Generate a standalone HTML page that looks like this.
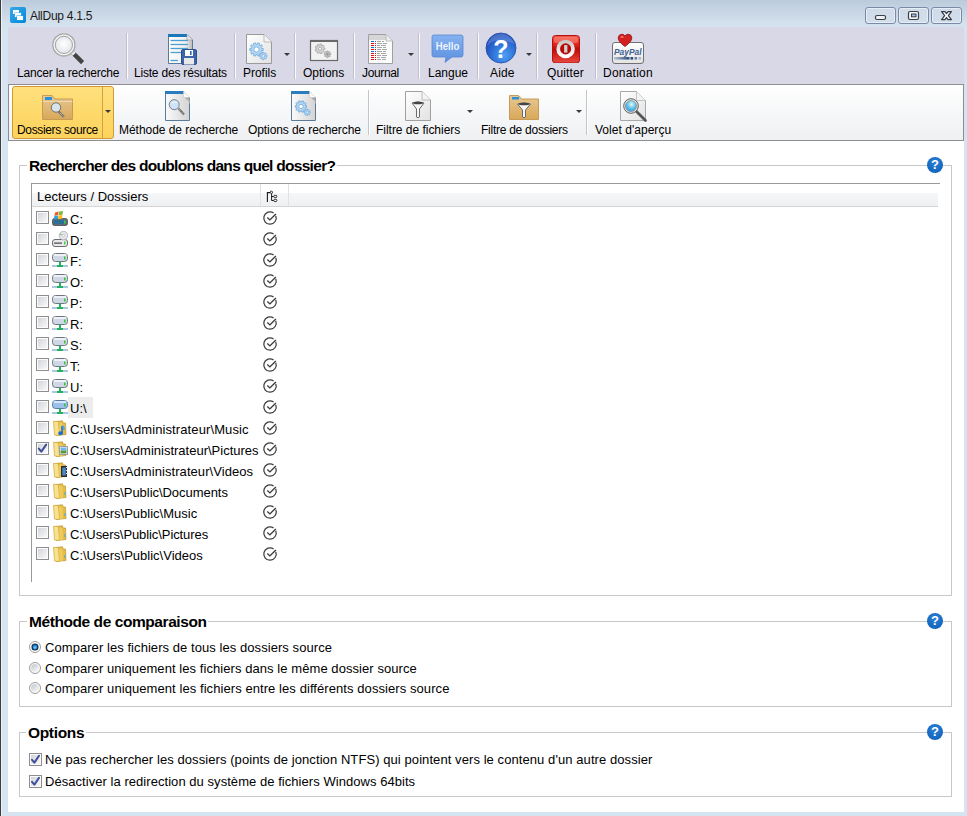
<!DOCTYPE html>
<html><head><meta charset="utf-8">
<style>
*{box-sizing:border-box;margin:0;padding:0}
html,body{width:967px;height:816px;overflow:hidden;background:#d6e3f1;font-family:"Liberation Sans",sans-serif;color:#000}
.a{position:absolute}
.t{position:absolute;white-space:pre;line-height:1}
#title{left:0;top:0;width:967px;height:27px;background:linear-gradient(#bccbdb,#d7e4f0)}
#lb{left:0;top:0;width:1px;height:816px;background:#3c3c3c}
#lb2{left:1px;top:0;width:1px;height:816px;background:#eef3f9}
.cb{top:7px;width:31px;height:17px;border:1px solid #7b89a6;border-radius:3px;background:linear-gradient(#cfdbe9,#d3deeb);box-shadow:inset 0 0 0 1px #e6edf5}
#tb1{left:8px;top:27px;width:956px;height:57px;background:#d9d8e6}
#tb1b{left:8px;top:84px;width:956px;height:1px;background:#8e8e8e}
#tb2{left:8px;top:84px;width:956px;height:57px;border:1px solid #8e8e8e;background:linear-gradient(#ffffff,#eef0f2)}
#client{left:8px;top:141px;width:956px;height:671px;background:#fff}
.sep1{top:33px;width:2px;height:46px;border-left:1px solid #c0c0cc;border-right:1px solid #fafafd}
.sep2{top:90px;width:2px;height:45px;border-left:1px solid #c2c5cc;border-right:1px solid #fff}
.l1{font-size:12px;letter-spacing:-0.2px;top:67px;color:#000}
.l2{font-size:12px;letter-spacing:-0.2px;top:124px;color:#000}
.arr{width:0;height:0;border-left:3px solid transparent;border-right:3px solid transparent;border-top:3px solid #3a3a3a}
.gb{border:1px solid #c8c8c8}
.gt{font-weight:bold;font-size:15.5px;background:#fff;padding:0 2px}
.txt{font-size:13px}
.chk{width:13px;height:13px;border:1px solid #8e8e8e;background:linear-gradient(135deg,#cdd1d8,#f6f6f7 85%);box-shadow:inset 0 0 0 1px #fbfbfb}
.help{width:16px;height:16px;border-radius:50%;background:radial-gradient(circle at 50% 35%,#2a80d4,#0c5cb6);color:#fff;font-weight:bold;font-size:13px;text-align:center;line-height:16px}
.rad{width:12px;height:12px;border-radius:50%;border:1px solid #9a9a9a;background:radial-gradient(circle at 40% 35%,#fff,#d6d6d6)}
</style><style id="fit">#t1{letter-spacing:-0.273px;transform:translateX(0.00px)}#t2{letter-spacing:-0.200px;transform:translateX(0.00px)}#t3{letter-spacing:-0.200px;transform:translateX(-1.00px)}#t4{letter-spacing:-0.033px;transform:translateX(0.00px)}#t5{letter-spacing:-0.033px;transform:translateX(0.00px)}#t6{letter-spacing:-0.367px;transform:translateX(0.00px)}#t7{letter-spacing:0.000px;transform:translateX(-1.00px)}#t8{letter-spacing:0.133px;transform:translateX(0.00px)}#t9{letter-spacing:0.133px;transform:translateX(-1.00px)}#t10{letter-spacing:0.229px;transform:translateX(-1.00px)}#t11{letter-spacing:-0.343px;transform:translateX(0.00px)}#t12{letter-spacing:-0.042px;transform:translateX(0.00px)}#t13{letter-spacing:-0.095px;transform:translateX(0.00px)}#t14{letter-spacing:-0.024px;transform:translateX(-1.00px)}#t15{letter-spacing:-0.259px;transform:translateX(0.00px)}#t16{letter-spacing:0.031px;transform:translateX(0.00px)}#t17{letter-spacing:-0.707px;transform:translateX(0.00px)}#t18{letter-spacing:0.000px;transform:translateX(-1.00px)}#r10{letter-spacing:0.107px;transform:translateX(0.00px)}#r11{letter-spacing:0.000px;transform:translateX(0.00px)}#r12{letter-spacing:0.069px;transform:translateX(0.00px)}#r13{letter-spacing:-0.042px;transform:translateX(0.00px)}#r14{letter-spacing:0.000px;transform:translateX(0.00px)}#r15{letter-spacing:-0.087px;transform:translateX(0.00px)}#r16{letter-spacing:0.000px;transform:translateX(0.00px)}#t36{letter-spacing:-0.428px;transform:translateX(0.00px)}#t37{letter-spacing:0.062px;transform:translateX(0.00px)}#t38{letter-spacing:0.068px;transform:translateX(0.00px)}#t39{letter-spacing:0.074px;transform:translateX(0.00px)}#t40{letter-spacing:-0.334px;transform:translateX(-1.00px)}#t41{letter-spacing:0.078px;transform:translateX(0.00px)}#t42{letter-spacing:0.049px;transform:translateX(0.00px)}</style></head><body>
<div id="title" class="a"></div>
<div id="lb" class="a"></div>
<div id="lb2" class="a"></div>
<!-- app icon -->
<svg class="a" style="left:10px;top:7px" width="16" height="16" viewBox="0 0 16 16">
 <defs><linearGradient id="appg" x1="0" y1="0" x2="1" y2="1"><stop offset="0" stop-color="#3aa8e8"/><stop offset="1" stop-color="#0088d8"/></linearGradient></defs>
 <rect x="0" y="0" width="16" height="16" rx="2" fill="url(#appg)"/>
 <rect x="3" y="3" width="6" height="4" fill="#fff"/>
 <rect x="4.5" y="5.5" width="7" height="5" fill="#48b0ee"/>
 <rect x="5" y="6" width="6" height="4" fill="#fff"/>
 <rect x="6.5" y="8.5" width="7" height="5" fill="#2a9ee4"/>
 <rect x="7" y="9" width="6" height="4" fill="#fff"/>
</svg>
<div id="t1" class="t" style="left:30px;top:10px;font-size:12px;color:#1a1a1a">AllDup 4.1.5</div>
<div class="a cb" style="left:865px"></div>
<div class="a cb" style="left:898px"></div>
<div class="a cb" style="left:931px"></div>
<svg class="a" style="left:865px;top:7px" width="97" height="17" viewBox="0 0 97 17">
 <rect x="10.5" y="8.5" width="10" height="4" rx="1.5" fill="#f0f0f0" stroke="#3a3d4a" stroke-width="1.2"/>
 <rect x="43.5" y="4.5" width="10" height="8" rx="1.5" fill="#f4f4f4" stroke="#3a3d4a" stroke-width="1.2"/>
 <rect x="46.5" y="7" width="4.5" height="2.8" fill="#9cc0e0" stroke="#3a3d4a" stroke-width="1"/>
 <path d="M76.6 4.6 H80 L81.5 6.6 L83 4.6 H86.4 L83.4 8.6 L86.4 12.6 H83 L81.5 10.6 L80 12.6 H76.6 L79.6 8.6 Z" fill="#f6f6f6" stroke="#363a48" stroke-width="1.2" stroke-linejoin="round"/>
</svg>

<div id="tb1" class="a"></div>
<div id="tb2" class="a"></div>
<div id="client" class="a"></div>

<!-- toolbar 1 labels -->
<div id="t2" class="t l1" style="left:17px">Lancer la recherche</div>
<div class="a sep1" style="left:126px"></div>
<div id="t3" class="t l1" style="left:135px">Liste des résultats</div>
<div class="a sep1" style="left:234px"></div>
<div id="t4" class="t l1" style="left:243px">Profils</div>
<div class="a arr" style="left:284px;top:53px"></div>
<div class="a sep1" style="left:294px"></div>
<div id="t5" class="t l1" style="left:303px">Options</div>
<div class="a sep1" style="left:353px"></div>
<div id="t6" class="t l1" style="left:362px">Journal</div>
<div class="a arr" style="left:408px;top:53px"></div>
<div class="a sep1" style="left:418px"></div>
<div id="t7" class="t l1" style="left:429px">Langue</div>
<div class="a sep1" style="left:477px"></div>
<div id="t8" class="t l1" style="left:490px">Aide</div>
<div class="a arr" style="left:526px;top:53px"></div>
<div class="a sep1" style="left:536px"></div>
<div id="t9" class="t l1" style="left:548px">Quitter</div>
<div class="a sep1" style="left:595px"></div>
<div id="t10" class="t l1" style="left:604px">Donation</div>

<!-- toolbar 2 -->
<div class="a" style="left:12px;top:86px;width:102px;height:53px;border:1px solid #d09a36;border-radius:3px;background:linear-gradient(#fee07c,#fdd35c)"></div>
<div class="a" style="left:102px;top:87px;width:1px;height:51px;background:#d4a040"></div>
<div class="a arr" style="left:105px;top:110px"></div>
<div id="t11" class="t l2" style="left:17px">Dossiers source</div>
<div id="t12" class="t l2" style="left:119px">Méthode de recherche</div>
<div id="t13" class="t l2" style="left:248px">Options de recherche</div>
<div class="a sep2" style="left:368px"></div>
<div id="t14" class="t l2" style="left:377px">Filtre de fichiers</div>
<div class="a arr" style="left:467px;top:110px"></div>
<div id="t15" class="t l2" style="left:481px">Filtre de dossiers</div>
<div class="a arr" style="left:576px;top:110px"></div>
<div class="a sep2" style="left:586px"></div>
<div id="t16" class="t l2" style="left:595px">Volet d'aperçu</div>

<div id="icons"><!-- TB1 icons -->
<svg class="a" style="left:48px;top:30px" width="40" height="38" viewBox="0 0 40 38">
 <defs><radialGradient id="lens1" cx="0.5" cy="0.45" r="0.6"><stop offset="0" stop-color="#ffffff"/><stop offset="1" stop-color="#dfe3e8"/></radialGradient></defs>
 <path d="M24.5 22.5 L34.6 32.6" stroke="#444" stroke-width="4.4" stroke-linecap="butt"/>
 <path d="M23.2 21.2 L26.3 24.3" stroke="#e8e8e8" stroke-width="4.4"/>
 <circle cx="15.9" cy="14.9" r="11.1" fill="#f4f4f4" stroke="#a9a9a9" stroke-width="1.3"/>
 <circle cx="15.9" cy="14.9" r="8.6" fill="url(#lens1)" stroke="#a0a0a0" stroke-width="1"/>
</svg>
<svg class="a" style="left:166px;top:32px" width="34" height="34" viewBox="0 0 34 34">
 <defs><linearGradient id="docg" x1="0" y1="0" x2="1" y2="0"><stop offset="0" stop-color="#fdfdfd"/><stop offset="0.7" stop-color="#f0f0f0"/><stop offset="1" stop-color="#b8b8b8"/></linearGradient></defs>
 <path d="M2.5 2.5 L21 2.5 L26.5 8 L26.5 31.5 L2.5 31.5 Z" fill="url(#docg)" stroke="#5a7a96" stroke-width="1"/>
 <rect x="2" y="2" width="19" height="3" fill="#1a78b8"/>
 <path d="M21 2.5 L21 8 L26.5 8" fill="#e6e6e6" stroke="#9a9a9a" stroke-width="0.6"/>
 <g stroke="#4aa0d4" stroke-width="1.3"><path d="M4.5 8.5H22"/><path d="M4.5 12.5H22"/><path d="M4.5 16.5H22"/><path d="M4.5 20.5H16"/><path d="M4.5 28.5H12"/></g>
 <rect x="15.5" y="17.5" width="15" height="15" rx="1.5" fill="#3d64a8" stroke="#2e4f8c" stroke-width="1"/>
 <rect x="19" y="18" width="8" height="6" fill="#fbfbfb"/>
 <rect x="24" y="19" width="1.6" height="4" fill="#3d64a8"/>
 <rect x="18" y="26" width="10" height="6.5" fill="#e8e8e8"/>
</svg>
<svg class="a" style="left:245px;top:33px" width="30" height="32" viewBox="0 0 30 32">
 <defs><linearGradient id="docw" x1="0" y1="0" x2="1" y2="1"><stop offset="0" stop-color="#ffffff"/><stop offset="1" stop-color="#e2e2e2"/></linearGradient></defs>
 <path d="M1.5 1.5 L19 1.5 L26.5 9 L26.5 30.5 L1.5 30.5 Z" fill="url(#docw)" stroke="#9a9a9a" stroke-width="1"/>
 <path d="M19 1.5 L19 9 L26.5 9" fill="#f4f4f4" stroke="#b0b0b0" stroke-width="0.8"/>
 <path d="M16.36 15.32 L18.24 15.56 L18.24 17.44 L16.36 17.68 L16.13 18.40 L17.50 19.70 L16.40 21.22 L14.74 20.31 L14.13 20.75 L14.47 22.62 L12.69 23.20 L11.88 21.49 L11.12 21.49 L10.31 23.20 L8.53 22.62 L8.87 20.75 L8.26 20.31 L6.60 21.22 L5.50 19.70 L6.87 18.40 L6.64 17.68 L4.76 17.44 L4.76 15.56 L6.64 15.32 L6.87 14.60 L5.50 13.30 L6.60 11.78 L8.26 12.69 L8.87 12.25 L8.53 10.38 L10.31 9.80 L11.12 11.51 L11.88 11.51 L12.69 9.80 L14.47 10.38 L14.13 12.25 L14.74 12.69 L16.40 11.78 L17.50 13.30 L16.13 14.60 Z" fill="#b6d8f4" stroke="#5e9fd6" stroke-width="0.7"/><circle cx="11.5" cy="16.5" r="2.6" fill="#ffffff" stroke="#5e9fd6" stroke-width="0.7"/><path d="M20.98 22.18 L22.04 22.35 L22.04 23.65 L20.98 23.82 L20.77 24.31 L21.41 25.19 L20.49 26.11 L19.61 25.47 L19.12 25.68 L18.95 26.74 L17.65 26.74 L17.48 25.68 L16.99 25.47 L16.11 26.11 L15.19 25.19 L15.83 24.31 L15.62 23.82 L14.56 23.65 L14.56 22.35 L15.62 22.18 L15.83 21.69 L15.19 20.81 L16.11 19.89 L16.99 20.53 L17.48 20.32 L17.65 19.26 L18.95 19.26 L19.12 20.32 L19.61 20.53 L20.49 19.89 L21.41 20.81 L20.77 21.69 Z" fill="#b6d8f4" stroke="#5e9fd6" stroke-width="0.6"/><circle cx="18.3" cy="23" r="1.3" fill="#ffffff" stroke="#5e9fd6" stroke-width="0.6"/>
</svg>
<svg class="a" style="left:309px;top:39px" width="30" height="23" viewBox="0 0 30 23">
 <rect x="1.5" y="1.5" width="27" height="20" fill="#f2f2f2" stroke="#6a6a6a" stroke-width="1.2"/>
 <rect x="1" y="1" width="28" height="2" fill="#6a6a6a"/>
 <path d="M14.47 8.86 L15.84 9.05 L15.84 10.55 L14.47 10.74 L14.27 11.31 L15.19 12.34 L14.23 13.49 L13.05 12.76 L12.53 13.06 L12.58 14.44 L11.10 14.70 L10.67 13.39 L10.08 13.28 L9.23 14.37 L7.93 13.62 L8.45 12.34 L8.06 11.88 L6.71 12.16 L6.19 10.75 L7.41 10.10 L7.41 9.50 L6.19 8.85 L6.71 7.44 L8.06 7.72 L8.45 7.26 L7.93 5.98 L9.23 5.23 L10.08 6.32 L10.67 6.21 L11.10 4.90 L12.58 5.16 L12.53 6.54 L13.05 6.84 L14.23 6.11 L15.19 7.26 L14.27 8.29 Z" fill="#d8d8d8" stroke="#9a9a9a" stroke-width="0.7"/><circle cx="11" cy="9.8" r="1.7" fill="#f2f2f2" stroke="#9a9a9a" stroke-width="0.7"/><path d="M20.79 14.59 L21.75 14.73 L21.75 15.87 L20.79 16.01 L20.62 16.42 L21.20 17.20 L20.40 18.00 L19.62 17.42 L19.21 17.59 L19.07 18.55 L17.93 18.55 L17.79 17.59 L17.38 17.42 L16.60 18.00 L15.80 17.20 L16.38 16.42 L16.21 16.01 L15.25 15.87 L15.25 14.73 L16.21 14.59 L16.38 14.18 L15.80 13.40 L16.60 12.60 L17.38 13.18 L17.79 13.01 L17.93 12.05 L19.07 12.05 L19.21 13.01 L19.62 13.18 L20.40 12.60 L21.20 13.40 L20.62 14.18 Z" fill="#c8c8c8" stroke="#8a8a8a" stroke-width="0.6"/><circle cx="18.5" cy="15.3" r="1.0" fill="#a0a0a0" stroke="#8a8a8a" stroke-width="0.6"/>
</svg>
<svg class="a" style="left:367px;top:33px" width="28" height="32" viewBox="0 0 28 32">
 <path d="M1.5 1.5 L19 1.5 L25.5 8 L25.5 30.5 L1.5 30.5 Z" fill="#fbfbfb" stroke="#a0a0a0" stroke-width="1"/>
 <rect x="2" y="2" width="17" height="5" fill="#d6d6d6"/>
 <path d="M19 1.5 L19 8 L25.5 8" fill="#eee" stroke="#b0b0b0" stroke-width="0.8"/>
 <g stroke-width="1.1">
  <path d="M4 8.5h3M4 14.5h3M4 18.5h3" stroke="#2266cc"/>
  <path d="M4 10.5h3M4 12.5h3M4 16.5h3M4 20.5h3M4 22.5h3M4 24.5h3M4 26.5h3" stroke="#dd1111"/>
  <path d="M8 8.5h1M8 14.5h1M8 18.5h1" stroke="#2266cc"/>
  <path d="M8 10.5h1M8 12.5h1M8 16.5h1M8 20.5h1M8 22.5h1M8 24.5h1M8 26.5h1" stroke="#dd1111"/>
  <path d="M10 8.5h4M15 8.5h2M10 10.5h5M16 10.5h4M10 12.5h3M14 12.5h5M10 14.5h5M16 14.5h3M10 16.5h4M15 16.5h5M10 18.5h5M16 18.5h3M10 20.5h3M14 20.5h5M10 22.5h4M15 22.5h5M10 24.5h3M14 24.5h5M10 26.5h4M15 26.5h4" stroke="#a8a8a8"/>
 </g>
</svg>
<svg class="a" style="left:431px;top:34px" width="34" height="30" viewBox="0 0 34 30">
 <defs><linearGradient id="hel" x1="0" y1="0" x2="0" y2="1"><stop offset="0" stop-color="#86b2f0"/><stop offset="1" stop-color="#5b8fe0"/></linearGradient></defs>
 <path d="M3 1 H30 Q32 1 32 3 V21 Q32 23 30 23 H21 L14 28.5 L15 23 H3 Q1 23 1 21 V3 Q1 1 3 1 Z" fill="url(#hel)" stroke="#5a88d0" stroke-width="0.8"/>
 <text x="4.8" y="15.8" textLength="23.5" lengthAdjust="spacingAndGlyphs" font-family="Liberation Sans" font-weight="bold" font-size="10" fill="#eef4ff">Hello</text>
</svg>
<svg class="a" style="left:484px;top:32px" width="34" height="33" viewBox="0 0 34 33">
 <defs><radialGradient id="aid" cx="0.6" cy="0.75" r="0.8"><stop offset="0" stop-color="#4aa0f4"/><stop offset="0.6" stop-color="#2a66d0"/><stop offset="1" stop-color="#1b45b0"/></radialGradient></defs>
 <circle cx="17" cy="16" r="15" fill="url(#aid)" stroke="#1d47a8" stroke-width="0.8"/>
 <path d="M3 14 Q10 4 31 12 Q26 2 17 1.5 Q6 2 3 14 Z" fill="#ffffff" opacity="0.18"/>
 <text x="17" y="26" text-anchor="middle" font-family="Liberation Sans" font-weight="bold" font-size="25" fill="#ffffff">?</text>
</svg>
<svg class="a" style="left:552px;top:35px" width="28" height="28" viewBox="0 0 28 28">
 <defs><linearGradient id="qred" x1="0" y1="0" x2="0" y2="1"><stop offset="0" stop-color="#f25a4a"/><stop offset="0.3" stop-color="#e02a20"/><stop offset="0.5" stop-color="#c00a08"/><stop offset="1" stop-color="#e84a40"/></linearGradient>
 <linearGradient id="qring" x1="0" y1="0" x2="0" y2="1"><stop offset="0" stop-color="#c8c8c8"/><stop offset="1" stop-color="#ffffff"/></linearGradient></defs>
 <rect x="0.5" y="0.5" width="27" height="27.5" rx="3" fill="url(#qred)" stroke="#b81010" stroke-width="1"/>
 <rect x="2" y="2" width="24" height="6" rx="2" fill="#ff9a90" opacity="0.45"/>
 <circle cx="13.6" cy="13.9" r="7.4" fill="#b80808" stroke="url(#qring)" stroke-width="3.7"/>
 <rect x="12.1" y="10.1" width="3.3" height="7.5" fill="#d0d0d0"/>
</svg>
<svg class="a" style="left:611px;top:33px" width="34" height="32" viewBox="0 0 34 32">
 <defs><linearGradient id="ppc" x1="0" y1="0" x2="0" y2="1"><stop offset="0" stop-color="#ffffff"/><stop offset="1" stop-color="#e4e4e4"/></linearGradient>
 <linearGradient id="ppb" x1="0" y1="0" x2="1" y2="0"><stop offset="0" stop-color="#b8c4d4"/><stop offset="1" stop-color="#2a4a78"/></linearGradient></defs>
 <rect x="1.5" y="9.5" width="31" height="21" rx="2.5" fill="url(#ppc)" stroke="#707070" stroke-width="1"/>
 <text x="3" y="21.5" textLength="27.5" lengthAdjust="spacingAndGlyphs" font-family="Liberation Sans" font-style="italic" font-weight="bold" font-size="9.5" fill="#3d6196">PayPal</text>
 <rect x="3" y="24" width="15.5" height="2.6" fill="url(#ppb)"/>
 <rect x="19.5" y="24" width="2.6" height="2.6" fill="#2a4a78"/>
 <rect x="23.5" y="24" width="2.6" height="2.6" fill="#6680a4"/>
 <rect x="27.5" y="24" width="2.6" height="2.6" fill="#a8b8cc"/>
 <path d="M14 13.5 Q7 8.5 7.2 4.8 Q7.6 1.2 11 1.2 Q13 1.2 14 3 Q15 1.2 17 1.2 Q20.6 1.2 20.8 4.8 Q21 8.5 14 13.5 Z" fill="#d42020" stroke="#8a1010" stroke-width="0.8"/>
 <ellipse cx="11" cy="4" rx="1.6" ry="1" fill="#ff9a9a" opacity="0.7"/>
</svg>
<!-- TB2 icons -->
<svg class="a" style="left:41px;top:94px" width="33" height="27" viewBox="0 0 33 27">
 <defs><linearGradient id="tan" x1="0" y1="0" x2="0" y2="1"><stop offset="0" stop-color="#e8c894"/><stop offset="1" stop-color="#d8a858"/></linearGradient></defs>
 <path d="M1.5 1.5 H11 L14 5 H31.5 V25.5 H1.5 Z" fill="url(#tan)" stroke="#c89a58" stroke-width="1"/>
 <path d="M1.5 7.5 H31.5" stroke="#f0dcb8" stroke-width="0.8"/>
 <rect x="4" y="3" width="7" height="3" fill="#2a90d8"/>
 <path d="M17.5 17.5 L23 23" stroke="#6a6a6a" stroke-width="2.2"/>
 <path d="M17.5 17.5 L23 23" stroke="#e8e8e8" stroke-width="1" stroke-dasharray="1 1"/>
 <circle cx="15" cy="13.5" r="4.7" fill="#d8e4ea" stroke="#707070" stroke-width="1"/>
</svg>
<svg class="a" style="left:164px;top:90px" width="28" height="32" viewBox="0 0 28 32"><defs><linearGradient id="docb" x1="0" y1="0" x2="1" y2="0"><stop offset="0" stop-color="#fafafa"/><stop offset="1" stop-color="#d4d4d4"/></linearGradient><linearGradient id="dsh164" x1="0" y1="0" x2="0" y2="1"><stop offset="0" stop-color="#555"/><stop offset="1" stop-color="#d8d8d8"/></linearGradient></defs><path d="M1.5 1.5 H19 L25.5 8 V30.5 H1.5 Z" fill="url(#docb)" stroke="#5a7a9a" stroke-width="1"/><rect x="1" y="1" width="18.5" height="3" fill="#2a7cbc"/><path d="M19.5 1.2 L25.8 7.5 V14 Q23 8 19.5 7.5 Z" fill="url(#dsh164)" opacity="0.85"/><path d="M19.5 1.2 V7.5 H25.8 Z" fill="#fafafa"/><path d="M14.5 18.5 L20 24.5" stroke="#6a6a6a" stroke-width="2.2"/><path d="M15 19 L19.7 24.2" stroke="#e0e0e0" stroke-width="0.8" stroke-dasharray="1 1"/><circle cx="10.2" cy="14.65" r="5" fill="#cfe2f8" stroke="#7a8088" stroke-width="1"/><path d="M7.5 13 Q10 11 13 12.5" stroke="#fff" stroke-width="1" fill="none" opacity="0.8"/></svg>
<svg class="a" style="left:290px;top:90px" width="28" height="32" viewBox="0 0 28 32"><defs><linearGradient id="dsh290" x1="0" y1="0" x2="0" y2="1"><stop offset="0" stop-color="#555"/><stop offset="1" stop-color="#d8d8d8"/></linearGradient></defs><path d="M1.5 1.5 H19 L25.5 8 V30.5 H1.5 Z" fill="url(#docb)" stroke="#5a7a9a" stroke-width="1"/><rect x="1" y="1" width="18.5" height="3" fill="#2a7cbc"/><path d="M19.5 1.2 L25.8 7.5 V14 Q23 8 19.5 7.5 Z" fill="url(#dsh290)" opacity="0.85"/><path d="M19.5 1.2 V7.5 H25.8 Z" fill="#fafafa"/><path d="M15.18 15.48 L16.74 15.70 L16.74 17.30 L15.18 17.52 L14.98 18.13 L16.12 19.23 L15.18 20.52 L13.78 19.78 L13.26 20.16 L13.54 21.72 L12.02 22.21 L11.32 20.79 L10.68 20.79 L9.98 22.21 L8.46 21.72 L8.74 20.16 L8.22 19.78 L6.82 20.52 L5.88 19.23 L7.02 18.13 L6.82 17.52 L5.26 17.30 L5.26 15.70 L6.82 15.48 L7.02 14.87 L5.88 13.77 L6.82 12.48 L8.22 13.22 L8.74 12.84 L8.46 11.28 L9.98 10.79 L10.68 12.21 L11.32 12.21 L12.02 10.79 L13.54 11.28 L13.26 12.84 L13.78 13.22 L15.18 12.48 L16.12 13.77 L14.98 14.87 Z" fill="#b6d8f4" stroke="#5e9fd6" stroke-width="0.7"/><circle cx="11" cy="16.5" r="2.2" fill="#ffffff" stroke="#5e9fd6" stroke-width="0.7"/><path d="M19.49 21.59 L20.45 21.73 L20.45 22.87 L19.49 23.01 L19.32 23.42 L19.90 24.20 L19.10 25.00 L18.32 24.42 L17.91 24.59 L17.77 25.55 L16.63 25.55 L16.49 24.59 L16.08 24.42 L15.30 25.00 L14.50 24.20 L15.08 23.42 L14.91 23.01 L13.95 22.87 L13.95 21.73 L14.91 21.59 L15.08 21.18 L14.50 20.40 L15.30 19.60 L16.08 20.18 L16.49 20.01 L16.63 19.05 L17.77 19.05 L17.91 20.01 L18.32 20.18 L19.10 19.60 L19.90 20.40 L19.32 21.18 Z" fill="#b6d8f4" stroke="#5e9fd6" stroke-width="0.6"/><circle cx="17.2" cy="22.3" r="1.1" fill="#ffffff" stroke="#5e9fd6" stroke-width="0.6"/></svg>
<svg class="a" style="left:404px;top:90px" width="28" height="32" viewBox="0 0 28 32">
 <path d="M1.5 1.5 H18 L26.5 10 V30.5 H1.5 Z" fill="url(#docw)" stroke="#a0a0a0" stroke-width="1"/>
 <path d="M18 1.5 V10 H26.5" fill="#f4f4f4" stroke="#b0b0b0" stroke-width="0.8"/>
 <path d="M8 13 Q14 10.5 20 13 L15.5 19 V27 Q14 28.5 12.5 27 V19 Z" fill="#f6f6f6" stroke="#6a6a6a" stroke-width="1"/>
 <ellipse cx="14" cy="13" rx="5" ry="1.3" fill="#444"/>
</svg>
<svg class="a" style="left:508px;top:94px" width="32" height="27" viewBox="0 0 32 27">
 <path d="M1.5 1.5 H10.5 L13.5 5 H30.5 V25.5 H1.5 Z" fill="url(#tan)" stroke="#c89a58" stroke-width="1"/>
 <rect x="4" y="3" width="7" height="2.5" fill="#2a90d8"/>
 <path d="M9.5 10 Q16 7.5 22.5 10 L17.5 16 V23 Q16 24.5 14.5 23 V16 Z" fill="#f6f6f6" stroke="#6a6a6a" stroke-width="1"/>
 <ellipse cx="16" cy="10" rx="5.5" ry="1.3" fill="#444"/>
</svg>
<svg class="a" style="left:619px;top:90px" width="30" height="33" viewBox="0 0 30 33">
 <defs><radialGradient id="lensb" cx="0.55" cy="0.35" r="0.7"><stop offset="0" stop-color="#e8f8fa"/><stop offset="0.5" stop-color="#68c4e8"/><stop offset="1" stop-color="#2898d8"/></radialGradient></defs>
 <path d="M1.5 1.5 H17.5 L26.5 10.5 V30.5 H1.5 Z" fill="url(#docw)" stroke="#a8a8a8" stroke-width="1"/>
 <path d="M17.5 1.5 V10.5 H26.5" fill="#f4f4f4" stroke="#b8b8b8" stroke-width="0.8"/>
 <path d="M17 21 L26.5 30.5" stroke="#555" stroke-width="2.8" stroke-linecap="round"/>
 <circle cx="12" cy="16" r="7.3" fill="#e8e8e8" stroke="#606060" stroke-width="1"/>
 <circle cx="12" cy="16" r="5.6" fill="url(#lensb)" stroke="#888" stroke-width="0.6"/>
</svg>
</div><!--/icons-->
<!-- group 1 -->
<div class="a gb" style="left:19px;top:165px;width:933px;height:431px"></div>
<div id="t17" class="t gt" style="left:27px;top:158px">Rechercher des doublons dans quel dossier?</div>
<div class="a help" style="left:927px;top:157px">?</div>
<div class="a" style="left:31px;top:183px;width:909px;height:1px;background:#9a9a9a"></div>
<div class="a" style="left:31px;top:183px;width:1px;height:399px;background:#9a9a9a"></div>
<div class="a" style="left:32px;top:193px;width:906px;height:13px;background:linear-gradient(#f5f6f8,#eff0f2)"></div>
<div class="a" style="left:32px;top:206px;width:906px;height:1px;background:#d5d5d5"></div>
<div class="a" style="left:260px;top:184px;width:1px;height:22px;background:#e2e2e2"></div>
<div class="a" style="left:288px;top:184px;width:1px;height:22px;background:#e2e2e2"></div>
<div id="t18" class="t txt" style="left:38px;top:190px">Lecteurs / Dossiers</div>
<!-- help tree icon header -->
<svg class="a" style="left:266px;top:190px" width="12" height="13" viewBox="0 0 12 13">
 <path d="M1.4 12 V2.6 H4.2" fill="none" stroke="#1a1a1a" stroke-width="1.1"/>
 <path d="M5.6 3.4 V10.5 H7.8 M5.6 6.5 H7.8" fill="none" stroke="#1a1a1a" stroke-width="1"/>
 <circle cx="5.4" cy="2.3" r="1.15" fill="#fff" stroke="#1a1a1a" stroke-width="0.9"/>
 <rect x="7.9" y="5.3" width="2.9" height="2.3" rx="0.9" fill="#fff" stroke="#1a1a1a" stroke-width="0.9"/>
 <rect x="7.9" y="9.3" width="2.9" height="2.3" rx="0.9" fill="#fff" stroke="#1a1a1a" stroke-width="0.9"/>
</svg>


<div id="rows"><div class="a chk" style="left:36px;top:211px"></div>
<svg class="a" style="left:52px;top:210px" width="16" height="16" viewBox="0 0 16 16"><rect x="0.5" y="8.5" width="15" height="7" rx="2" fill="#5a6a78" stroke="#5b5f66"/><rect x="2" y="10" width="10" height="4" fill="#2f6e93"/><rect x="12" y="10.5" width="1.5" height="3" fill="#3bd13b"/><path d="M3 2.5 L6.5 1.5 L6.2 5 L2.5 6 Z" fill="#f05a28"/><path d="M7 1.5 L11 1 L10.5 4.8 L6.7 5.2 Z" fill="#7dbb42"/><path d="M2.3 6.3 L6 5.4 L5.7 9 L1.8 9.6 Z" fill="#2b9fe0"/><path d="M6.3 5.5 L10.4 5 L10 8.8 L6 9.2 Z" fill="#fcbb1b"/></svg>
<div id="r0" class="t txt" style="left:70px;top:213px">C:</div>
<svg class="a" style="left:262px;top:210px" width="16" height="16" viewBox="0 0 16 16"><path d="M13.83 5.88 A6.2 6.2 0 1 1 11.56 2.92" fill="none" stroke="#3c3c3c" stroke-width="1.25"/><path d="M5.3 7.6 L7.9 9.9 L13.9 3.9" fill="none" stroke="#3c3c3c" stroke-width="1.4"/></svg>
<div class="a chk" style="left:36px;top:232px"></div>
<svg class="a" style="left:52px;top:231px" width="16" height="16" viewBox="0 0 16 16"><rect x="0.5" y="8.5" width="15" height="7" rx="2.5" fill="#e8e8ea" stroke="#6a6d72"/><rect x="2" y="11.5" width="8" height="1.3" fill="#555"/><rect x="12" y="10.5" width="1.5" height="3" fill="#3bd13b"/><circle cx="11.5" cy="4.6" r="4.3" fill="#e4e4ec" stroke="#9a9aa8" stroke-width="0.6"/><circle cx="11.5" cy="4.6" r="1.2" fill="#fff" stroke="#aaa" stroke-width="0.5"/><path d="M8 3 L10 4" stroke="#6ad06a" stroke-width="1.2"/></svg>
<div id="r1" class="t txt" style="left:70px;top:234px">D:</div>
<svg class="a" style="left:262px;top:231px" width="16" height="16" viewBox="0 0 16 16"><path d="M13.83 5.88 A6.2 6.2 0 1 1 11.56 2.92" fill="none" stroke="#3c3c3c" stroke-width="1.25"/><path d="M5.3 7.6 L7.9 9.9 L13.9 3.9" fill="none" stroke="#3c3c3c" stroke-width="1.4"/></svg>
<div class="a chk" style="left:36px;top:253px"></div>
<svg class="a" style="left:52px;top:252px" width="16" height="16" viewBox="0 0 16 16"><rect x="0.5" y="1.5" width="15" height="8" rx="3" fill="#cfd6e4" stroke="#6f7682"/><rect x="1.5" y="2" width="13" height="2" rx="1" fill="#eef1f6"/><rect x="12" y="4.5" width="1.5" height="3" fill="#2fc92f"/><rect x="7" y="9.5" width="2" height="4" fill="#22b35a"/><rect x="0" y="13" width="16" height="2" fill="#a9c8e8"/><rect x="5" y="13" width="6" height="2" fill="#22b35a"/></svg>
<div id="r2" class="t txt" style="left:70px;top:255px">F:</div>
<svg class="a" style="left:262px;top:252px" width="16" height="16" viewBox="0 0 16 16"><path d="M13.83 5.88 A6.2 6.2 0 1 1 11.56 2.92" fill="none" stroke="#3c3c3c" stroke-width="1.25"/><path d="M5.3 7.6 L7.9 9.9 L13.9 3.9" fill="none" stroke="#3c3c3c" stroke-width="1.4"/></svg>
<div class="a chk" style="left:36px;top:274px"></div>
<svg class="a" style="left:52px;top:273px" width="16" height="16" viewBox="0 0 16 16"><rect x="0.5" y="1.5" width="15" height="8" rx="3" fill="#cfd6e4" stroke="#6f7682"/><rect x="1.5" y="2" width="13" height="2" rx="1" fill="#eef1f6"/><rect x="12" y="4.5" width="1.5" height="3" fill="#2fc92f"/><rect x="7" y="9.5" width="2" height="4" fill="#22b35a"/><rect x="0" y="13" width="16" height="2" fill="#a9c8e8"/><rect x="5" y="13" width="6" height="2" fill="#22b35a"/></svg>
<div id="r3" class="t txt" style="left:70px;top:276px">O:</div>
<svg class="a" style="left:262px;top:273px" width="16" height="16" viewBox="0 0 16 16"><path d="M13.83 5.88 A6.2 6.2 0 1 1 11.56 2.92" fill="none" stroke="#3c3c3c" stroke-width="1.25"/><path d="M5.3 7.6 L7.9 9.9 L13.9 3.9" fill="none" stroke="#3c3c3c" stroke-width="1.4"/></svg>
<div class="a chk" style="left:36px;top:295px"></div>
<svg class="a" style="left:52px;top:294px" width="16" height="16" viewBox="0 0 16 16"><rect x="0.5" y="1.5" width="15" height="8" rx="3" fill="#cfd6e4" stroke="#6f7682"/><rect x="1.5" y="2" width="13" height="2" rx="1" fill="#eef1f6"/><rect x="12" y="4.5" width="1.5" height="3" fill="#2fc92f"/><rect x="7" y="9.5" width="2" height="4" fill="#22b35a"/><rect x="0" y="13" width="16" height="2" fill="#a9c8e8"/><rect x="5" y="13" width="6" height="2" fill="#22b35a"/></svg>
<div id="r4" class="t txt" style="left:70px;top:297px">P:</div>
<svg class="a" style="left:262px;top:294px" width="16" height="16" viewBox="0 0 16 16"><path d="M13.83 5.88 A6.2 6.2 0 1 1 11.56 2.92" fill="none" stroke="#3c3c3c" stroke-width="1.25"/><path d="M5.3 7.6 L7.9 9.9 L13.9 3.9" fill="none" stroke="#3c3c3c" stroke-width="1.4"/></svg>
<div class="a chk" style="left:36px;top:316px"></div>
<svg class="a" style="left:52px;top:315px" width="16" height="16" viewBox="0 0 16 16"><rect x="0.5" y="1.5" width="15" height="8" rx="3" fill="#cfd6e4" stroke="#6f7682"/><rect x="1.5" y="2" width="13" height="2" rx="1" fill="#eef1f6"/><rect x="12" y="4.5" width="1.5" height="3" fill="#2fc92f"/><rect x="7" y="9.5" width="2" height="4" fill="#22b35a"/><rect x="0" y="13" width="16" height="2" fill="#a9c8e8"/><rect x="5" y="13" width="6" height="2" fill="#22b35a"/></svg>
<div id="r5" class="t txt" style="left:70px;top:318px">R:</div>
<svg class="a" style="left:262px;top:315px" width="16" height="16" viewBox="0 0 16 16"><path d="M13.83 5.88 A6.2 6.2 0 1 1 11.56 2.92" fill="none" stroke="#3c3c3c" stroke-width="1.25"/><path d="M5.3 7.6 L7.9 9.9 L13.9 3.9" fill="none" stroke="#3c3c3c" stroke-width="1.4"/></svg>
<div class="a chk" style="left:36px;top:337px"></div>
<svg class="a" style="left:52px;top:336px" width="16" height="16" viewBox="0 0 16 16"><rect x="0.5" y="1.5" width="15" height="8" rx="3" fill="#cfd6e4" stroke="#6f7682"/><rect x="1.5" y="2" width="13" height="2" rx="1" fill="#eef1f6"/><rect x="12" y="4.5" width="1.5" height="3" fill="#2fc92f"/><rect x="7" y="9.5" width="2" height="4" fill="#22b35a"/><rect x="0" y="13" width="16" height="2" fill="#a9c8e8"/><rect x="5" y="13" width="6" height="2" fill="#22b35a"/></svg>
<div id="r6" class="t txt" style="left:70px;top:339px">S:</div>
<svg class="a" style="left:262px;top:336px" width="16" height="16" viewBox="0 0 16 16"><path d="M13.83 5.88 A6.2 6.2 0 1 1 11.56 2.92" fill="none" stroke="#3c3c3c" stroke-width="1.25"/><path d="M5.3 7.6 L7.9 9.9 L13.9 3.9" fill="none" stroke="#3c3c3c" stroke-width="1.4"/></svg>
<div class="a chk" style="left:36px;top:358px"></div>
<svg class="a" style="left:52px;top:357px" width="16" height="16" viewBox="0 0 16 16"><rect x="0.5" y="1.5" width="15" height="8" rx="3" fill="#cfd6e4" stroke="#6f7682"/><rect x="1.5" y="2" width="13" height="2" rx="1" fill="#eef1f6"/><rect x="12" y="4.5" width="1.5" height="3" fill="#2fc92f"/><rect x="7" y="9.5" width="2" height="4" fill="#22b35a"/><rect x="0" y="13" width="16" height="2" fill="#a9c8e8"/><rect x="5" y="13" width="6" height="2" fill="#22b35a"/></svg>
<div id="r7" class="t txt" style="left:70px;top:360px">T:</div>
<svg class="a" style="left:262px;top:357px" width="16" height="16" viewBox="0 0 16 16"><path d="M13.83 5.88 A6.2 6.2 0 1 1 11.56 2.92" fill="none" stroke="#3c3c3c" stroke-width="1.25"/><path d="M5.3 7.6 L7.9 9.9 L13.9 3.9" fill="none" stroke="#3c3c3c" stroke-width="1.4"/></svg>
<div class="a chk" style="left:36px;top:379px"></div>
<svg class="a" style="left:52px;top:378px" width="16" height="16" viewBox="0 0 16 16"><rect x="0.5" y="1.5" width="15" height="8" rx="3" fill="#cfd6e4" stroke="#6f7682"/><rect x="1.5" y="2" width="13" height="2" rx="1" fill="#eef1f6"/><rect x="12" y="4.5" width="1.5" height="3" fill="#2fc92f"/><rect x="7" y="9.5" width="2" height="4" fill="#22b35a"/><rect x="0" y="13" width="16" height="2" fill="#a9c8e8"/><rect x="5" y="13" width="6" height="2" fill="#22b35a"/></svg>
<div id="r8" class="t txt" style="left:70px;top:381px">U:</div>
<svg class="a" style="left:262px;top:378px" width="16" height="16" viewBox="0 0 16 16"><path d="M13.83 5.88 A6.2 6.2 0 1 1 11.56 2.92" fill="none" stroke="#3c3c3c" stroke-width="1.25"/><path d="M5.3 7.6 L7.9 9.9 L13.9 3.9" fill="none" stroke="#3c3c3c" stroke-width="1.4"/></svg>
<div class="a" style="left:68px;top:397px;width:25px;height:21px;background:#ececec"></div>
<div class="a chk" style="left:36px;top:400px"></div>
<svg class="a" style="left:52px;top:399px" width="16" height="16" viewBox="0 0 16 16"><rect x="0.5" y="1.5" width="15" height="8" rx="3" fill="#9cc0e8" stroke="#5a7ca8"/><rect x="1.5" y="2" width="13" height="2" rx="1" fill="#d4e6f8"/><rect x="12" y="4.5" width="1.5" height="3" fill="#2fc92f"/><rect x="7" y="9.5" width="2" height="4" fill="#22b35a"/><rect x="0" y="13" width="16" height="2" fill="#a9c8e8"/><rect x="5" y="13" width="6" height="2" fill="#22b35a"/></svg>
<div id="r9" class="t txt" style="left:70px;top:402px">U:\</div>
<svg class="a" style="left:262px;top:399px" width="16" height="16" viewBox="0 0 16 16"><path d="M13.83 5.88 A6.2 6.2 0 1 1 11.56 2.92" fill="none" stroke="#3c3c3c" stroke-width="1.25"/><path d="M5.3 7.6 L7.9 9.9 L13.9 3.9" fill="none" stroke="#3c3c3c" stroke-width="1.4"/></svg>
<div class="a chk" style="left:36px;top:421px"></div>
<svg class="a" style="left:52px;top:420px" width="16" height="16" viewBox="0 0 16 16"><path d="M3.5 1.5 L10.5 0.8 L11 3 L13.5 3 L14 14.5 L4.5 15.5 Z" fill="#e4bc48" stroke="#c0962a" stroke-width="0.7"/><path d="M1.5 1.2 L6.5 1.8 L7.5 15.5 L2.5 15 Z" fill="#f8e290" stroke="#cfa53a" stroke-width="0.7"/><path d="M7 2.5 L10.5 3 L11 14.5 L7.5 15.3 Z" fill="#eecb5a"/><path d="M10 6 L10 13" stroke="#1f6fd0" stroke-width="1.6"/><ellipse cx="8.6" cy="13.3" rx="2.4" ry="2" fill="#1f6fd0"/><path d="M10.5 5.5 Q13 8 11.5 10" stroke="#4aa0f0" stroke-width="1.4" fill="none"/></svg>
<div id="r10" class="t txt" style="left:70px;top:423px">C:\Users\Administrateur\Music</div>
<svg class="a" style="left:262px;top:420px" width="16" height="16" viewBox="0 0 16 16"><path d="M13.83 5.88 A6.2 6.2 0 1 1 11.56 2.92" fill="none" stroke="#3c3c3c" stroke-width="1.25"/><path d="M5.3 7.6 L7.9 9.9 L13.9 3.9" fill="none" stroke="#3c3c3c" stroke-width="1.4"/></svg>
<div class="a chk" style="left:36px;top:442px"><svg class="a" style="left:0;top:0" width="11" height="11" viewBox="0 0 11 11"><path d="M1.8 5.6 L4.3 8.6 L9.2 1.6" fill="none" stroke="#3e4f98" stroke-width="2" stroke-linecap="round" stroke-linejoin="round"/></svg></div>
<svg class="a" style="left:52px;top:441px" width="16" height="16" viewBox="0 0 16 16"><path d="M3.5 1.5 L10.5 0.8 L11 3 L13.5 3 L14 14.5 L4.5 15.5 Z" fill="#e4bc48" stroke="#c0962a" stroke-width="0.7"/><path d="M1.5 1.2 L6.5 1.8 L7.5 15.5 L2.5 15 Z" fill="#f8e290" stroke="#cfa53a" stroke-width="0.7"/><path d="M7 2.5 L10.5 3 L11 14.5 L7.5 15.3 Z" fill="#eecb5a"/><rect x="7.5" y="5.5" width="8" height="8" fill="#fafafa" stroke="#9aa0a6"/><rect x="8.5" y="6.5" width="6" height="3" fill="#6cb6e8"/><rect x="8.5" y="9.5" width="6" height="3" fill="#5a9a3a"/></svg>
<div id="r11" class="t txt" style="left:70px;top:444px">C:\Users\Administrateur\Pictures</div>
<svg class="a" style="left:262px;top:441px" width="16" height="16" viewBox="0 0 16 16"><path d="M13.83 5.88 A6.2 6.2 0 1 1 11.56 2.92" fill="none" stroke="#3c3c3c" stroke-width="1.25"/><path d="M5.3 7.6 L7.9 9.9 L13.9 3.9" fill="none" stroke="#3c3c3c" stroke-width="1.4"/></svg>
<div class="a chk" style="left:36px;top:463px"></div>
<svg class="a" style="left:52px;top:462px" width="16" height="16" viewBox="0 0 16 16"><path d="M3.5 1.5 L10.5 0.8 L11 3 L13.5 3 L14 14.5 L4.5 15.5 Z" fill="#e4bc48" stroke="#c0962a" stroke-width="0.7"/><path d="M1.5 1.2 L6.5 1.8 L7.5 15.5 L2.5 15 Z" fill="#f8e290" stroke="#cfa53a" stroke-width="0.7"/><path d="M7 2.5 L10.5 3 L11 14.5 L7.5 15.3 Z" fill="#eecb5a"/><rect x="9" y="4" width="6" height="11" fill="#2b2f35"/><rect x="10.3" y="5.5" width="3.5" height="8" fill="#4c88c8"/><rect x="14" y="5" width="1" height="1" fill="#ddd"/><rect x="14" y="8" width="1" height="1" fill="#ddd"/><rect x="14" y="11" width="1" height="1" fill="#ddd"/></svg>
<div id="r12" class="t txt" style="left:70px;top:465px">C:\Users\Administrateur\Videos</div>
<svg class="a" style="left:262px;top:462px" width="16" height="16" viewBox="0 0 16 16"><path d="M13.83 5.88 A6.2 6.2 0 1 1 11.56 2.92" fill="none" stroke="#3c3c3c" stroke-width="1.25"/><path d="M5.3 7.6 L7.9 9.9 L13.9 3.9" fill="none" stroke="#3c3c3c" stroke-width="1.4"/></svg>
<div class="a chk" style="left:36px;top:484px"></div>
<svg class="a" style="left:52px;top:483px" width="16" height="16" viewBox="0 0 16 16"><path d="M3.5 1.5 L10.5 0.8 L11 3 L13.5 3 L14 14.5 L4.5 15.5 Z" fill="#e4bc48" stroke="#c0962a" stroke-width="0.7"/><path d="M1.5 1.2 L6.5 1.8 L7.5 15.5 L2.5 15 Z" fill="#f8e290" stroke="#cfa53a" stroke-width="0.7"/><path d="M7 2.5 L10.5 3 L11 14.5 L7.5 15.3 Z" fill="#eecb5a"/><rect x="12.3" y="9" width="1" height="3" fill="#4aa8e8"/></svg>
<div id="r13" class="t txt" style="left:70px;top:486px">C:\Users\Public\Documents</div>
<svg class="a" style="left:262px;top:483px" width="16" height="16" viewBox="0 0 16 16"><path d="M13.83 5.88 A6.2 6.2 0 1 1 11.56 2.92" fill="none" stroke="#3c3c3c" stroke-width="1.25"/><path d="M5.3 7.6 L7.9 9.9 L13.9 3.9" fill="none" stroke="#3c3c3c" stroke-width="1.4"/></svg>
<div class="a chk" style="left:36px;top:505px"></div>
<svg class="a" style="left:52px;top:504px" width="16" height="16" viewBox="0 0 16 16"><path d="M3.5 1.5 L10.5 0.8 L11 3 L13.5 3 L14 14.5 L4.5 15.5 Z" fill="#e4bc48" stroke="#c0962a" stroke-width="0.7"/><path d="M1.5 1.2 L6.5 1.8 L7.5 15.5 L2.5 15 Z" fill="#f8e290" stroke="#cfa53a" stroke-width="0.7"/><path d="M7 2.5 L10.5 3 L11 14.5 L7.5 15.3 Z" fill="#eecb5a"/><rect x="12.3" y="9" width="1" height="3" fill="#4aa8e8"/></svg>
<div id="r14" class="t txt" style="left:70px;top:507px">C:\Users\Public\Music</div>
<svg class="a" style="left:262px;top:504px" width="16" height="16" viewBox="0 0 16 16"><path d="M13.83 5.88 A6.2 6.2 0 1 1 11.56 2.92" fill="none" stroke="#3c3c3c" stroke-width="1.25"/><path d="M5.3 7.6 L7.9 9.9 L13.9 3.9" fill="none" stroke="#3c3c3c" stroke-width="1.4"/></svg>
<div class="a chk" style="left:36px;top:526px"></div>
<svg class="a" style="left:52px;top:525px" width="16" height="16" viewBox="0 0 16 16"><path d="M3.5 1.5 L10.5 0.8 L11 3 L13.5 3 L14 14.5 L4.5 15.5 Z" fill="#e4bc48" stroke="#c0962a" stroke-width="0.7"/><path d="M1.5 1.2 L6.5 1.8 L7.5 15.5 L2.5 15 Z" fill="#f8e290" stroke="#cfa53a" stroke-width="0.7"/><path d="M7 2.5 L10.5 3 L11 14.5 L7.5 15.3 Z" fill="#eecb5a"/><rect x="12.3" y="9" width="1" height="3" fill="#4aa8e8"/></svg>
<div id="r15" class="t txt" style="left:70px;top:528px">C:\Users\Public\Pictures</div>
<svg class="a" style="left:262px;top:525px" width="16" height="16" viewBox="0 0 16 16"><path d="M13.83 5.88 A6.2 6.2 0 1 1 11.56 2.92" fill="none" stroke="#3c3c3c" stroke-width="1.25"/><path d="M5.3 7.6 L7.9 9.9 L13.9 3.9" fill="none" stroke="#3c3c3c" stroke-width="1.4"/></svg>
<div class="a chk" style="left:36px;top:547px"></div>
<svg class="a" style="left:52px;top:546px" width="16" height="16" viewBox="0 0 16 16"><path d="M3.5 1.5 L10.5 0.8 L11 3 L13.5 3 L14 14.5 L4.5 15.5 Z" fill="#e4bc48" stroke="#c0962a" stroke-width="0.7"/><path d="M1.5 1.2 L6.5 1.8 L7.5 15.5 L2.5 15 Z" fill="#f8e290" stroke="#cfa53a" stroke-width="0.7"/><path d="M7 2.5 L10.5 3 L11 14.5 L7.5 15.3 Z" fill="#eecb5a"/><rect x="12.3" y="9" width="1" height="3" fill="#4aa8e8"/></svg>
<div id="r16" class="t txt" style="left:70px;top:549px">C:\Users\Public\Videos</div>
<svg class="a" style="left:262px;top:546px" width="16" height="16" viewBox="0 0 16 16"><path d="M13.83 5.88 A6.2 6.2 0 1 1 11.56 2.92" fill="none" stroke="#3c3c3c" stroke-width="1.25"/><path d="M5.3 7.6 L7.9 9.9 L13.9 3.9" fill="none" stroke="#3c3c3c" stroke-width="1.4"/></svg>
</div><!--/rows-->

<!-- group 2 -->
<div class="a gb" style="left:19px;top:621px;width:933px;height:86px"></div>
<div id="t36" class="t gt" style="left:27px;top:614px">Méthode de comparaison</div>
<div class="a help" style="left:927px;top:613px">?</div>
<svg width="0" height="0" style="position:absolute"><defs><linearGradient id="rin" x1="0.2" y1="0.1" x2="0.8" y2="0.9"><stop offset="0" stop-color="#c9ccd2"/><stop offset="1" stop-color="#f6f6f6"/></linearGradient><radialGradient id="rsel" cx="0.5" cy="0.6" r="0.6"><stop offset="0" stop-color="#7fdcff"/><stop offset="0.55" stop-color="#1c8ad6"/><stop offset="1" stop-color="#0e4a86"/></radialGradient></defs></svg><svg class="a" style="left:29px;top:641px" width="13" height="13" viewBox="0 0 13 13"><circle cx="6" cy="6" r="5.5" fill="#fdfdfd" stroke="#9c9c9c" stroke-width="1"/><circle cx="6" cy="6" r="3" fill="url(#rsel)" stroke="#0d2c50" stroke-width="1.1"/></svg>
<div id="t37" class="t txt" style="left:45px;top:641px">Comparer les fichiers de tous les dossiers source</div>
<svg class="a" style="left:29px;top:662px" width="13" height="13" viewBox="0 0 13 13"><circle cx="6" cy="6" r="5.5" fill="#fdfdfd" stroke="#9c9c9c" stroke-width="1"/><circle cx="6" cy="6" r="4" fill="url(#rin)"/></svg>
<div id="t38" class="t txt" style="left:45px;top:662px">Comparer uniquement les fichiers dans le même dossier source</div>
<svg class="a" style="left:29px;top:682px" width="13" height="13" viewBox="0 0 13 13"><circle cx="6" cy="6" r="5.5" fill="#fdfdfd" stroke="#9c9c9c" stroke-width="1"/><circle cx="6" cy="6" r="4" fill="url(#rin)"/></svg>
<div id="t39" class="t txt" style="left:45px;top:682px">Comparer uniquement les fichiers entre les différents dossiers source</div>

<!-- group 3 -->
<div class="a gb" style="left:19px;top:732px;width:933px;height:65px"></div>
<div id="t40" class="t gt" style="left:27px;top:725px">Options</div>
<div class="a help" style="left:927px;top:724px">?</div>
<div class="a chk" style="left:29px;top:753px"><svg class="a" style="left:0;top:0" width="11" height="11" viewBox="0 0 11 11"><path d="M2 5.8 L4.4 8.6 L9 1.8" fill="none" stroke="#3e4f98" stroke-width="2" stroke-linecap="round" stroke-linejoin="round"/></svg></div>
<div id="t41" class="t txt" style="left:45px;top:753px">Ne pas rechercher les dossiers (points de jonction NTFS) qui pointent vers le contenu d'un autre dossier</div>
<div class="a chk" style="left:29px;top:775px"><svg class="a" style="left:0;top:0" width="11" height="11" viewBox="0 0 11 11"><path d="M2 5.8 L4.4 8.6 L9 1.8" fill="none" stroke="#3e4f98" stroke-width="2" stroke-linecap="round" stroke-linejoin="round"/></svg></div>
<div id="t42" class="t txt" style="left:45px;top:775px">Désactiver la redirection du système de fichiers Windows 64bits</div>
</body></html>
